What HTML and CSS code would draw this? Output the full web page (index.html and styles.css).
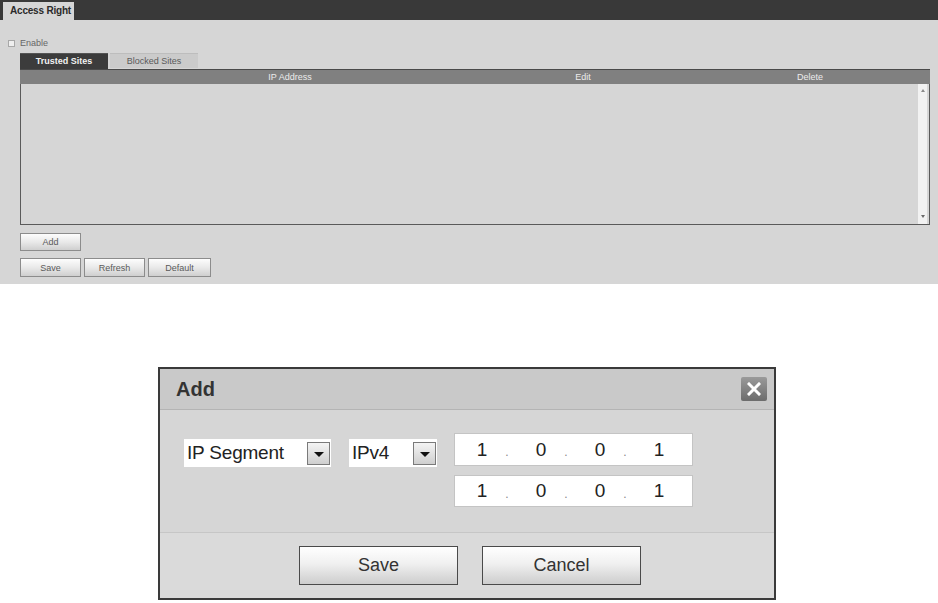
FILE: index.html
```html
<!DOCTYPE html>
<html>
<head>
<meta charset="utf-8">
<link rel="stylesheet" href="styles.css">
</head>
<body>
<div class="topbar">
  <div class="main-tab">Access Right</div>
</div>
<div class="panel">
  <div class="enable-row">
    <span class="checkbox"></span>
    <span class="enable-label">Enable</span>
  </div>
  <div class="subtabs">
    <div class="subtab active">Trusted Sites</div>
    <div class="subtab">Blocked Sites</div>
  </div>
  <div class="table">
    <div class="thead">
      <div class="th th-ip">IP Address</div>
      <div class="th th-edit">Edit</div>
      <div class="th th-del">Delete</div>
    </div>
    <div class="tbody">
      <div class="rows"></div>
      <div class="scrollbar">
        <span class="arrow-up"></span>
        <span class="arrow-down"></span>
      </div>
    </div>
  </div>
  <div class="btn-row first">
    <button class="btn">Add</button>
  </div>
  <div class="btn-row">
    <button class="btn">Save</button>
    <button class="btn">Refresh</button>
    <button class="btn">Default</button>
  </div>
</div>

<div class="dialog">
  <div class="dlg-title">
    <span class="dlg-title-text">Add</span>
    <span class="close-btn">
      <svg width="14" height="14" viewBox="0 0 14 14"><path d="M2 2 L12 12 M12 2 L2 12" stroke="#ffffff" stroke-width="3" stroke-linecap="square"/></svg>
    </span>
  </div>
  <div class="dlg-body">
    <div class="select sel-type">
      <span class="sel-text">IP Segment</span>
      <span class="sel-arrow"></span>
    </div>
    <div class="select sel-ver">
      <span class="sel-text">IPv4</span>
      <span class="sel-arrow"></span>
    </div>
    <div class="ip-col">
      <div class="ip-input">
        <span class="oct">1</span><span class="dot">.</span><span class="oct">0</span><span class="dot">.</span><span class="oct">0</span><span class="dot">.</span><span class="oct">1</span>
      </div>
      <div class="ip-input">
        <span class="oct">1</span><span class="dot">.</span><span class="oct">0</span><span class="dot">.</span><span class="oct">0</span><span class="dot">.</span><span class="oct">1</span>
      </div>
    </div>
  </div>
  <div class="dlg-footer">
    <button class="big-btn">Save</button>
    <button class="big-btn">Cancel</button>
  </div>
</div>
</body>
</html>
```
FILE: styles.css
```css
* { box-sizing: border-box; }
body {
  margin: 0;
  background: #ffffff;
  font-family: "Liberation Sans", Arial, sans-serif;
  width: 938px;
  height: 603px;
  overflow: hidden;
}
.topbar {
  height: 20px;
  background: #393939;
  display: flex;
  align-items: flex-end;
  padding-left: 3px;
}
.main-tab {
  width: 71px;
  height: 18px;
  background: #d6d6d6;
  font-size: 10px;
  font-weight: bold;
  color: #2a2a2a;
  padding-left: 7px;
  line-height: 18px;
  white-space: nowrap;
  letter-spacing: -0.2px;
}
.panel {
  background: #d6d6d6;
  height: 264px;
  padding: 18px 0 0 20px;
}
.enable-row {
  display: flex;
  align-items: center;
  height: 10px;
  margin-left: -12px;
  gap: 5px;
}
.checkbox {
  width: 7px;
  height: 7px;
  border: 1px solid #a8a8a8;
  background: #efefef;
}
.enable-label {
  font-size: 9px;
  color: #666;
}
.subtabs {
  display: flex;
  gap: 2px;
  margin-top: 5px;
  height: 16px;
}
.subtab {
  width: 88px;
  height: 15px;
  background: #cbcbcb;
  border-top: 1px solid #bdbdbd;
  font-size: 9px;
  color: #5a5a5a;
  text-align: center;
  line-height: 14px;
}
.subtab.active {
  height: 16px;
  background: #3c3c3c;
  border-top: 1px solid #555;
  color: #f2f2f2;
  font-weight: bold;
}
.table {
  width: 910px;
}
.thead {
  display: grid;
  grid-template-columns: 540px 46px 1fr;
  height: 15px;
  background: #808080;
  border-top: 1px solid #4a4a4a;
  font-size: 9px;
  color: #ececec;
  line-height: 14px;
}
.th { text-align: center; }
.th-del { text-align: left; padding-left: 191px; }
.tbody {
  height: 141px;
  display: flex;
  border: 1px solid #5a5a5a;
  border-top: none;
}
.rows { flex: 1; }
.scrollbar {
  width: 9px;
  margin-right: 2px;
  background: #f2f2f2;
  display: flex;
  flex-direction: column;
  justify-content: space-between;
  align-items: center;
  padding: 5px 0 6px;
}
.arrow-up {
  width: 0; height: 0;
  border-left: 2px solid transparent;
  border-right: 2px solid transparent;
  border-bottom: 3px solid #8a8a8a;
}
.arrow-down {
  width: 0; height: 0;
  border-left: 2px solid transparent;
  border-right: 2px solid transparent;
  border-top: 3px solid #6a6a6a;
}
.btn-row {
  display: flex;
  gap: 3px;
  margin-top: 7px;
}
.btn-row.first { margin-top: 8px; }
.btn {
  width: 61px;
  height: 19px;
  border: 1px solid #8c8c8c;
  background: linear-gradient(#fdfdfd, #e9e9e9 50%, #cfcfcf);
  font-family: "Liberation Sans", Arial, sans-serif;
  font-size: 9px;
  color: #5a5a5a;
  padding: 0;
}
.btn-row.first .btn { height: 18px; }
.btn-row .btn:nth-child(3) { width: 63px; }

.dialog {
  margin: 83px 0 0 158px;
  width: 618px;
  height: 233px;
  border: 2px solid #3a3a3a;
  display: flex;
  flex-direction: column;
}
.dlg-title {
  height: 41px;
  background: #c9c9c9;
  border-bottom: 1px solid #b4b4b4;
  display: flex;
  align-items: center;
  justify-content: space-between;
  padding: 0 7px 0 16px;
}
.dlg-title-text {
  font-size: 20px;
  font-weight: bold;
  color: #333;
}
.close-btn {
  width: 26px;
  height: 24px;
  background: linear-gradient(#9a9a9a, #6c6c6c);
  border-radius: 2px;
  display: flex;
  align-items: center;
  justify-content: center;
  margin-top: -1px;
}
.dlg-body {
  height: 123px;
  background: #d6d6d6;
  border-bottom: 1px solid #c6c6c6;
  display: flex;
  align-items: flex-start;
  padding: 23px 0 0 24px;
}
.select {
  margin-top: 6px;
  height: 28px;
  background: #ffffff;
  display: flex;
  align-items: center;
  justify-content: space-between;
  padding: 0 1px 0 3px;
}
.sel-type { width: 147px; margin-right: 18px; }
.sel-ver { width: 88px; margin-right: 17px; }
.sel-text {
  font-size: 19px;
  color: #222;
  letter-spacing: -0.2px;
}
.sel-arrow {
  width: 23px;
  height: 23px;
  border: 1px solid #7a7a7a;
  background: linear-gradient(#f4f4f4, #cfcfcf);
  position: relative;
}
.sel-arrow::after {
  content: "";
  position: absolute;
  left: 6px;
  top: 9px;
  border-left: 5px solid transparent;
  border-right: 5px solid transparent;
  border-top: 5px solid #111;
}
.ip-col {
  display: flex;
  flex-direction: column;
  gap: 9px;
}
.ip-input {
  width: 239px;
  height: 33px;
  background: #ffffff;
  border: 1px solid #c4c4c4;
  display: flex;
  align-items: center;
  padding-left: 17px;
}
.ip-input + .ip-input { height: 32px; }
.oct {
  width: 20px;
  text-align: center;
  font-size: 19px;
  color: #222;
}
.dot {
  width: 6px;
  margin: 5px 21px 0 12px;
  text-align: center;
  font-size: 12px;
  color: #888;
}
.dlg-footer {
  flex: 1;
  background: #dadada;
  display: flex;
  justify-content: center;
  gap: 24px;
  padding: 13px 0 0 6px;
}
.big-btn {
  width: 159px;
  height: 39px;
  border: 1px solid #4a4a4a;
  background: linear-gradient(#ffffff, #f0f0f0 45%, #cdcdcd);
  font-family: "Liberation Sans", Arial, sans-serif;
  font-size: 18px;
  color: #333;
  padding: 0;
}
```
